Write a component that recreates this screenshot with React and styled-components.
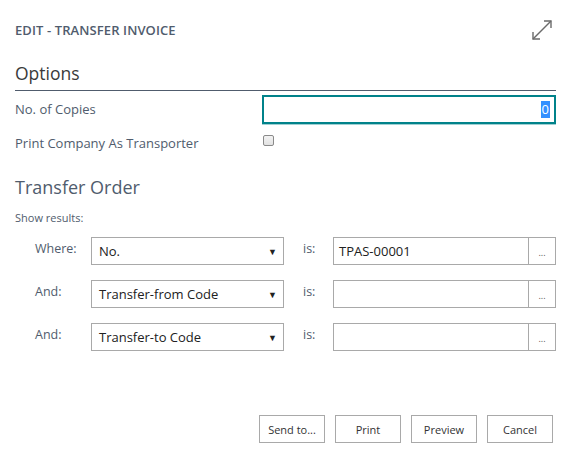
import React from 'react';
import styled, { createGlobalStyle } from 'styled-components';

const GlobalStyle = createGlobalStyle`
  body {
    margin: 0;
    background: #fff;
    font-family: "Open Sans", "Noto Sans", sans-serif;
    color: #505c6d;
  }
`;

const Dialog = styled.div`
  width: 573px;
  height: 461px;
  box-sizing: border-box;
  padding: 0 17px 0 15px;
  display: flex;
  flex-direction: column;
`;

const Header = styled.div`
  display: flex;
  justify-content: space-between;
  align-items: center;
  height: 60px;
  padding-bottom: 2px;
  .title {
    font-size: 13px;
    font-weight: 600;
    letter-spacing: 0.1px;
    color: #505c6d;
  }
  svg {
    margin-right: 3px;
  }
`;

const SectionTitle = styled.h2`
  margin: 0;
  font-weight: 400;
  font-size: ${(p) => p.size || 18}px;
  color: ${(p) => p.color || '#333'};
  padding-bottom: ${(p) => p.gap || 0}px;
  border-bottom: ${(p) => (p.rule ? '1px solid #505c6d' : 'none')};
  line-height: 1.3;
`;

const FieldRow = styled.div`
  display: flex;
  align-items: center;
  height: ${(p) => p.h}px;
  .label {
    width: 247px;
    font-size: 13px;
    color: #505c6d;
  }
`;

const NumberInput = styled.div`
  flex: 1;
  height: 29px;
  box-sizing: border-box;
  border: 2px solid #00828a;
  box-shadow: 0 1px 0 #9fd0d3;
  display: flex;
  justify-content: flex-end;
  align-items: center;
  padding-right: 4px;
  span {
    background: #3390ff;
    color: #fff;
    font-size: 13px;
    line-height: 17px;
    padding: 0 1px;
  }
`;

const Checkbox = styled.div`
  width: 9px;
  height: 9px;
  margin-left: 1px;
  margin-top: -5px;
  border: 1px solid #8a8a8a;
  border-radius: 2px;
  background: linear-gradient(#f3f3f3, #e2e2e2);
`;

const Hint = styled.div`
  font-size: 11px;
  color: #505c6d;
  margin-top: 11px;
  margin-bottom: 12px;
`;

const FilterList = styled.div`
  display: flex;
  flex-direction: column;
  gap: 15px;
  padding-left: 20px;
`;

const FilterRow = styled.div`
  display: flex;
  align-items: flex-start;
  height: 28px;
`;

const RowLabel = styled.div`
  width: ${(p) => p.w}px;
  font-size: 12.5px;
  color: #505c6d;
  padding-top: 3px;
`;

const Select = styled.div`
  width: 193px;
  height: 28px;
  box-sizing: border-box;
  border: 1px solid #a9a9a9;
  display: flex;
  align-items: center;
  justify-content: space-between;
  padding: 0 6px 0 7px;
  font-size: 13px;
  color: #212121;
  .arrow {
    font-size: 9px;
    color: #222;
  }
`;

const Spacer = styled.div`
  width: 19px;
`;

const TextInput = styled.div`
  width: 196px;
  height: 28px;
  box-sizing: border-box;
  border: 1px solid #a9a9a9;
  display: flex;
  align-items: center;
  padding-left: 5px;
  font-size: 13px;
  color: #212121;
`;

const LookupButton = styled.div`
  width: 27px;
  height: 28px;
  box-sizing: border-box;
  border: 1px solid #a9a9a9;
  border-left: none;
  display: flex;
  justify-content: center;
  align-items: flex-end;
  padding-bottom: 7px;
  font-size: 9px;
  line-height: 9px;
  color: #555;
`;

const Footer = styled.div`
  margin-top: auto;
  margin-bottom: 18px;
  display: flex;
  justify-content: flex-end;
  gap: 10px;
  margin-right: 3px;
`;

const Button = styled.button`
  width: 66px;
  height: 28px;
  background: #fff;
  border: 1px solid #a9a9a9;
  font-family: inherit;
  font-size: 11px;
  color: #333;
  padding: 0;
`;

const Gap = styled.div`
  height: ${(p) => p.h}px;
`;

const ExpandIcon = () => (
  <svg width="22" height="22" viewBox="0 0 22 22" fill="none" stroke="#6b6b6b" strokeWidth="1.4">
    <path d="M2 20 L20 2" />
    <path d="M13 2 H20 V9" />
    <path d="M2 13 V20 H9" />
  </svg>
);

const filters = [
  { label: 'Where:', field: 'No.', value: 'TPAS-00001' },
  { label: 'And:', field: 'Transfer-from Code', value: '' },
  { label: 'And:', field: 'Transfer-to Code', value: '' },
];

const App = () => {
  return (
    <>
      <GlobalStyle />
      <Dialog>
        <Header>
          <span className="title">EDIT - TRANSFER INVOICE</span>
          <ExpandIcon />
        </Header>
        <SectionTitle rule gap={5} size={17.5} color="#3a3a3a">Options</SectionTitle>
        <FieldRow h={37}>
          <span className="label">No. of Copies</span>
          <NumberInput>
            <span>0</span>
          </NumberInput>
        </FieldRow>
        <FieldRow h={30}>
          <span className="label">Print Company As Transporter</span>
          <Checkbox />
        </FieldRow>
        <Gap h={18} />
        <SectionTitle size={18} color="#505c6d">Transfer Order</SectionTitle>
        <Hint>Show results:</Hint>
        <FilterList>
          {filters.map((f, i) => (
            <FilterRow key={i}>
              <RowLabel w={56}>{f.label}</RowLabel>
              <Select>
                <span>{f.field}</span>
                <span className="arrow">▼</span>
              </Select>
              <Spacer />
              <RowLabel w={30}>is:</RowLabel>
              <TextInput>{f.value}</TextInput>
              <LookupButton>...</LookupButton>
            </FilterRow>
          ))}
        </FilterList>
        <Footer>
          <Button>Send to...</Button>
          <Button>Print</Button>
          <Button>Preview</Button>
          <Button>Cancel</Button>
        </Footer>
      </Dialog>
    </>
  );
};

export default App;
